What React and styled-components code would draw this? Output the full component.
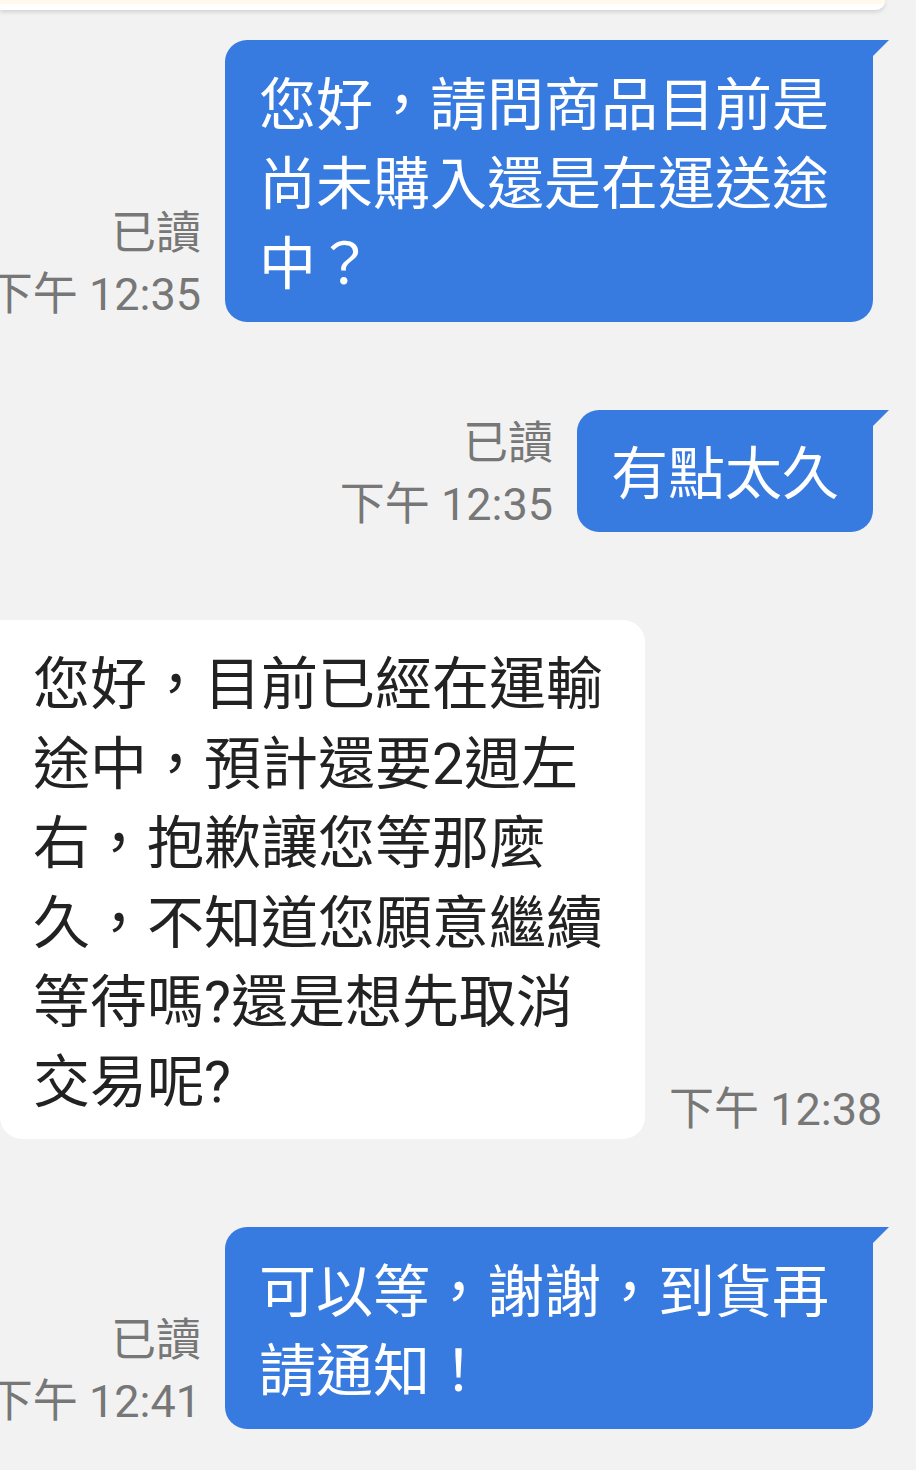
import React from 'react';
import styled, {createGlobalStyle} from 'styled-components';

const GlobalStyle = createGlobalStyle`
  html, body {
    margin: 0;
    padding: 0;
    background: #f2f2f2;
    overflow: hidden;
  }

  body {
    font-family: Roboto, "Noto Sans CJK TC", "Noto Sans", sans-serif;
    -webkit-font-smoothing: antialiased;
  }
`

const Screen = styled.div`
  width: 916px;
  height: 1470px;
  overflow: hidden;
  background: #f2f2f2;
`

// leftover of the card above, cut by the top of the screen
const TopCard = styled.div`
  width: 885px;
  height: 6px;
  background: #fff;
  border-top: 4px solid #fffaeb;
  border-bottom-right-radius: 9px;
  box-shadow: 0 2px 4px rgba(0, 0, 0, 0.14);
`

const Thread = styled.div`
  display: flex;
  flex-direction: column;
  gap: 88px;
  padding-top: 30px;
`

const Row = styled.div`
  display: flex;
  align-items: flex-end;
  gap: 24px;
  justify-content: ${p => (p.$mine ? 'flex-end' : 'flex-start')};
  padding-right: ${p => (p.$mine ? '43px' : '0')};
`

const Meta = styled.div`
  flex-shrink: 0;
  white-space: nowrap;
  text-align: right;
  color: #777;
  font-size: 45px;
  line-height: 61px;
  margin-bottom: ${p => (p.$mine ? '-3px' : '-1px')};
`

const Bubble = styled.div`
  position: relative;
  flex-shrink: 0;
  box-sizing: border-box;
  max-width: ${p => (p.$mine ? '648px' : '645px')};
  padding: ${p => (p.$mine ? '25.5px 34px 17.5px' : '25px 34px 17px 33px')};
  font-size: 57px;
  line-height: 79.5px;
  border-radius: 22px;
  background: ${p => (p.$mine ? '#377ae0' : '#fff')};
  color: ${p => (p.$mine ? '#fff' : '#222')};
  ${p => (p.$mine ? 'border-top-right-radius: 0;' : 'border-top-left-radius: 0;')}

  &::after {
    content: '';
    display: ${p => (p.$mine ? 'block' : 'none')};
    position: absolute;
    top: 0;
    right: -16px;
    width: 0;
    height: 0;
    border-top: 16px solid #377ae0;
    border-right: 16px solid transparent;
  }
`

const messages = [
  {mine: true, read: true, time: '下午 12:35', text: '您好，請問商品目前是尚未購入還是在運送途中？'},
  {mine: true, read: true, time: '下午 12:35', text: '有點太久'},
  {
    mine: false,
    time: '下午 12:38',
    text: '您好，目前已經在運輸途中，預計還要2週左右，抱歉讓您等那麼久，不知道您願意繼續等待嗎?還是想先取消交易呢?',
  },
  {mine: true, read: true, time: '下午 12:41', text: '可以等，謝謝，到貨再請通知！'},
]

const App = () => {
  return (
    <Screen>
      <GlobalStyle/>
      <TopCard/>
      <Thread>
        {messages.map((m, i) => (
          <Row key={i} $mine={m.mine}>
            {m.mine ? (
              <>
                <Meta $mine>
                  {m.read && <div>已讀</div>}
                  <div>{m.time}</div>
                </Meta>
                <Bubble $mine>{m.text}</Bubble>
              </>
            ) : (
              <>
                <Bubble>{m.text}</Bubble>
                <Meta>{m.time}</Meta>
              </>
            )}
          </Row>
        ))}
      </Thread>
    </Screen>
  );
};

export default App;
